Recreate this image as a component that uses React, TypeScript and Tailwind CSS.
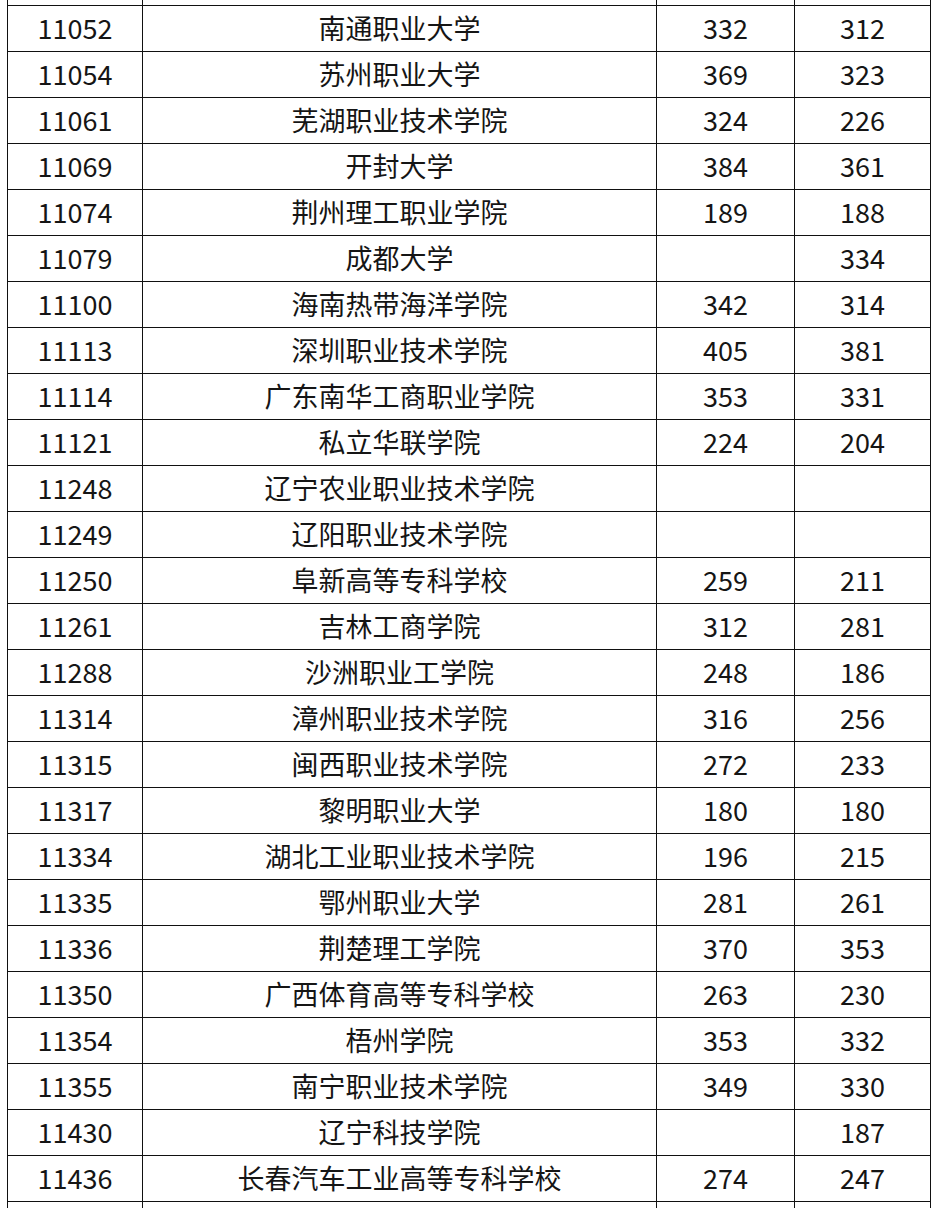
const rows: [string, string, string, string][] = [
  ['11052', '南通职业大学', '332', '312'],
  ['11054', '苏州职业大学', '369', '323'],
  ['11061', '芜湖职业技术学院', '324', '226'],
  ['11069', '开封大学', '384', '361'],
  ['11074', '荆州理工职业学院', '189', '188'],
  ['11079', '成都大学', '', '334'],
  ['11100', '海南热带海洋学院', '342', '314'],
  ['11113', '深圳职业技术学院', '405', '381'],
  ['11114', '广东南华工商职业学院', '353', '331'],
  ['11121', '私立华联学院', '224', '204'],
  ['11248', '辽宁农业职业技术学院', '', ''],
  ['11249', '辽阳职业技术学院', '', ''],
  ['11250', '阜新高等专科学校', '259', '211'],
  ['11261', '吉林工商学院', '312', '281'],
  ['11288', '沙洲职业工学院', '248', '186'],
  ['11314', '漳州职业技术学院', '316', '256'],
  ['11315', '闽西职业技术学院', '272', '233'],
  ['11317', '黎明职业大学', '180', '180'],
  ['11334', '湖北工业职业技术学院', '196', '215'],
  ['11335', '鄂州职业大学', '281', '261'],
  ['11336', '荆楚理工学院', '370', '353'],
  ['11350', '广西体育高等专科学校', '263', '230'],
  ['11354', '梧州学院', '353', '332'],
  ['11355', '南宁职业技术学院', '349', '330'],
  ['11430', '辽宁科技学院', '', '187'],
  ['11436', '长春汽车工业高等专科学校', '274', '247'],
];

const cell = 'flex items-center justify-center border-r border-b border-[#111]';

function Row({ values, h }: { values: string[]; h: string }) {
  return (
    <>
      {values.map((v, i) => (
        <div key={i} className={`${cell} ${h}`}>
          {v}
        </div>
      ))}
    </>
  );
}

export default function App() {
  return (
    <div className="h-[1208px] w-[942px] overflow-hidden bg-white text-[#151515]">
      <div
        className="ml-[7px] grid grid-cols-[135px_514px_138px_136px] border-l border-[#111] text-[27px] leading-none"
        style={{ fontFamily: '"Noto Sans CJK SC", "Noto Sans", sans-serif' }}
      >
        <Row values={['', '', '', '']} h="h-[6px]" />
        {rows.map((r) => (
          <Row key={r[0]} values={r} h="h-[46px] pb-[2px]" />
        ))}
        <Row values={['', '', '', '']} h="h-[20px]" />
      </div>
    </div>
  );
}
